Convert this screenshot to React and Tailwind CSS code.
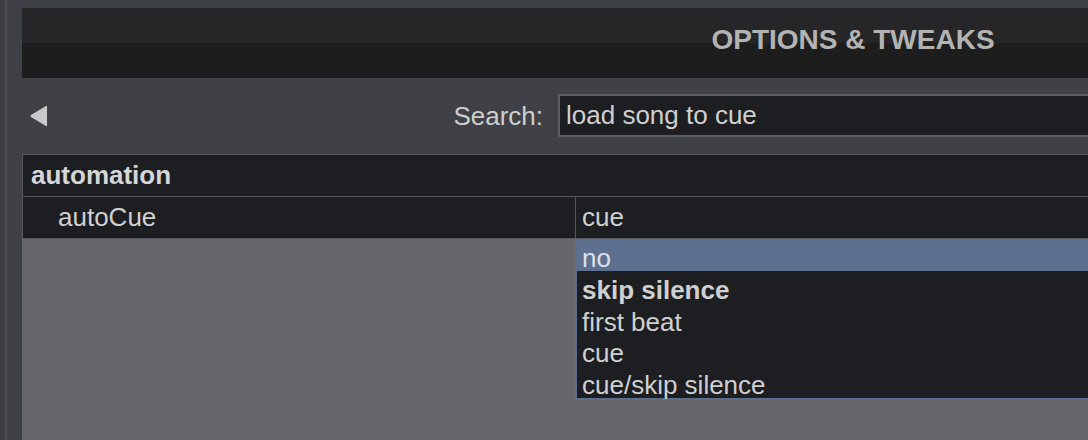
import React, { useState } from "react";

const options = ["no", "skip silence", "first beat", "cue", "cue/skip silence"];

function Triangle() {
  return (
    <svg width="20" height="22" viewBox="0 0 20 22" className="shrink-0">
      <path
        d="M18 1.5 L18 20.5 Q18 21.5 17 21 L2 12 Q1 11 2 10 L17 1 Q18 0.5 18 1.5 Z"
        fill="#c9c9c9"
      />
    </svg>
  );
}

function App() {
  const [query, setQuery] = useState("load song to cue");
  const [selected] = useState("no");

  return (
    <div className="w-[1088px] h-[440px] overflow-hidden bg-[#404146] flex font-['Liberation_Sans',Arial,sans-serif] text-[26px]">
      <div className="w-[5px] bg-[#3d3e43] shrink-0" />
      <div className="w-[2px] bg-[#4e4f55] shrink-0" />
      <div className="w-[15px] shrink-0" />

      <div className="relative flex flex-col pt-[8px] w-[1662px] shrink-0">
        {/* header */}
        <div className="h-[70px] flex items-center justify-center pb-[6px] bg-[linear-gradient(#262628_50%,#1d1d1e_50%)]">
          <span className="text-[28px] font-bold text-[#b3b3b3] leading-none">
            OPTIONS &amp; TWEAKS
          </span>
        </div>

        {/* search row */}
        <div className="h-[76px] flex items-center">
          <div className="w-[521px] flex items-center justify-between pl-[7px]">
            <Triangle />
            <span className="text-[#cfcfcf] leading-none">Search:</span>
          </div>
          <input
            type="text"
            value={query}
            onChange={(e) => setQuery(e.target.value)}
            className="ml-[15px] mt-[-1px] h-[43px] w-[1126px] bg-[#1d1e21] border-2 border-[#5e5f64] px-[6px] text-[#d0d0d0] text-[26px] focus:outline-none"
          />
        </div>

        {/* table */}
        <div className="border-t border-l border-[#5a5b60] bg-[#1d1e21]">
          <div className="h-[42px] flex items-center pl-[8px] border-b border-[#56575c] font-bold text-[#d6d6d6]">
            automation
          </div>
          <div className="h-[42px] flex border-b border-[#56575c]">
            <div className="w-[552px] flex items-center pl-[35px] text-[#d0d0d0]">
              autoCue
            </div>
            <div className="flex-1 flex items-center pl-[6px] border-l border-[#56575c] text-[#d0d0d0]">
              cue
            </div>
          </div>
        </div>

        <div className="flex-1 bg-[#67666c]" />

        {/* dropdown list */}
        <div className="absolute left-[553px] top-[239px] w-[1100px] bg-[#1d1e21] border-l-2 border-b-2 border-[#5b6e8e]">
          {options.map((opt) => (
            <div
              key={opt}
              className={
                "h-[31.8px] flex items-center pl-[5px] pt-[6px] leading-none " +
                (opt === selected
                  ? "bg-[#5d7090] text-[#dde1e8]"
                  : "text-[#d0d0d0]") +
                (opt === "skip silence" ? " font-bold" : "")
              }
            >
              {opt}
            </div>
          ))}
        </div>
      </div>
    </div>
  );
}

export default App;
